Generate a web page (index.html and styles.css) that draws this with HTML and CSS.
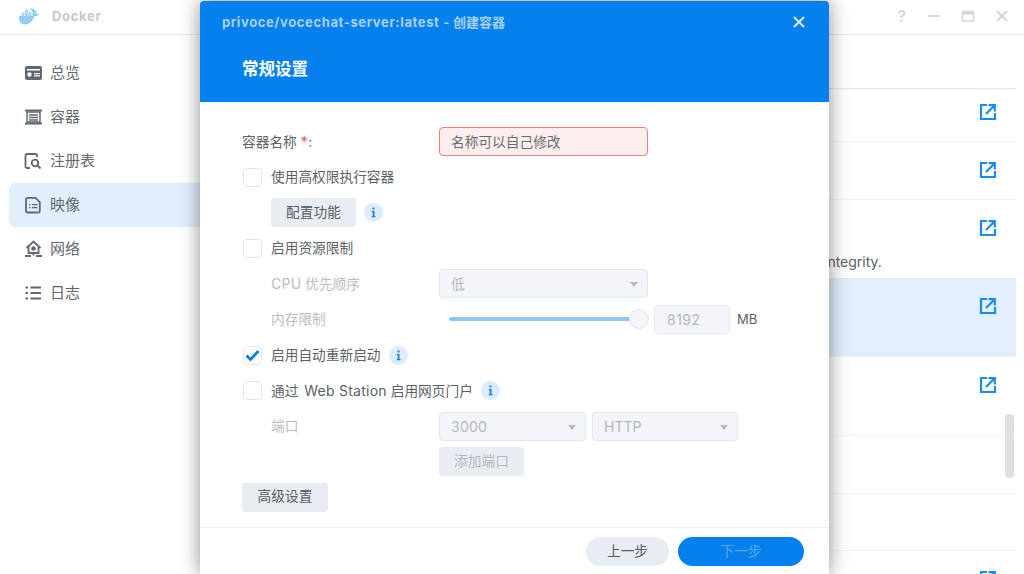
FILE: index.html
```html
<!DOCTYPE html>
<html lang="zh">
<head>
<meta charset="utf-8">
<title>Docker</title>
<link rel="stylesheet" href="styles.css">
</head>
<body>
<div class="app">
  <header class="titlebar">
    <svg class="logo" width="22" height="18" viewBox="0 0 22 18"><path d="M1 9h13.500c.4-2.800-.2-5-1.500-6.300l-1-.7.300-1.500 1.700 1.800 1.700-1.300.4 2.500 2.400-.3c.2 1.300-.3 2.300-1.400 3l4 .9c-1 1.700-2.800 2.500-4.800 2.500C14.500 14.800 11 17.500 7 17.500 3 17.500.5 14 1 9z" fill="#93cdf2"/><path d="M3.500 5.500h3V9h-3zM7 2.500h3V9H7zM10.500 4.500h3V9h-3z" fill="#a6d7f5"/></svg>
    <span class="app-name">Docker</span>
    <div class="controls">
      <span class="help">?</span>
      <svg width="14" height="14" viewBox="0 0 14 14"><path d="M1 7h12" stroke="#d3d6da" stroke-width="2"/></svg>
      <svg width="14" height="14" viewBox="0 0 14 14"><path d="M1.500 2.500h11v9.500h-11z" fill="none" stroke="#d3d6da" stroke-width="1.600"/><path d="M1 2h12v3.500H1z" fill="#d3d6da"/></svg>
      <svg width="14" height="14" viewBox="0 0 14 14"><path d="M2 2l10 10M12 2L2 12" stroke="#d3d6da" stroke-width="2"/></svg>
    </div>
  </header>
  <div class="workspace">
    <nav class="sidebar">
      <a class="nav-item"><svg width="18" height="18" viewBox="0 0 18 18"><rect x="1" y="2" width="17" height="14" rx="2" fill="#5f6873"/><path d="M3 5h13v1.500H3z" fill="#fff"/><rect x="3.500" y="8.500" width="4" height="4" rx="1" fill="#fff"/><path d="M10 9h6v1.200h-6zM10 11.300h6v1.200h-6z" fill="#fff"/></svg><span>总览</span></a>
      <a class="nav-item"><svg width="18" height="18" viewBox="0 0 18 18"><path d="M1 2.500h17M1 15.500h17" stroke="#5f6873" stroke-width="2"/><path d="M3 4h13v10H3z" fill="none" stroke="#5f6873" stroke-width="1.500"/><path d="M5 7h9M5 9.500h9M5 12h9" stroke="#5f6873" stroke-width="1.300"/></svg><span>容器</span></a>
      <a class="nav-item"><svg width="18" height="18" viewBox="0 0 18 18"><path d="M6 16H3a1.500 1.500 0 0 1-1.500-1.500v-11A1.500 1.500 0 0 1 3 2h8.500a1.500 1.500 0 0 1 1.500 1.500V5" fill="none" stroke="#5f6873" stroke-width="1.800"/><circle cx="11" cy="11" r="3.300" fill="none" stroke="#5f6873" stroke-width="1.800"/><path d="M13.500 13.500l3 3" stroke="#5f6873" stroke-width="2"/></svg><span>注册表</span></a>
      <a class="nav-item active"><svg width="18" height="18" viewBox="0 0 18 18"><path d="M3.500 1.800h8l4.300 4.300v8.900a1.500 1.500 0 0 1-1.500 1.500H3.500A1.500 1.500 0 0 1 2 15V3.300a1.500 1.500 0 0 1 1.500-1.500z" fill="none" stroke="#5f6873" stroke-width="1.800"/><path d="M5 8h1.500v1.300H5zM5 11h1.500v1.300H5zM8 8h5.500v1.300H8zM8 11h5.500v1.300H8z" fill="#5f6873"/></svg><span>映像</span></a>
      <a class="nav-item"><svg width="18" height="18" viewBox="0 0 18 18"><path d="M2.500 8L9.500 1.500 16.500 8" fill="none" stroke="#5f6873" stroke-width="1.800"/><path d="M4.500 7v6h10V7" fill="none" stroke="#5f6873" stroke-width="1.800"/><circle cx="9.500" cy="8.500" r="2.300" fill="#5f6873"/><path d="M9.500 13v2.500M1 16h6M12 16h6" stroke="#5f6873" stroke-width="1.800"/></svg><span>网络</span></a>
      <a class="nav-item"><svg width="18" height="18" viewBox="0 0 18 18"><path d="M1.500 3.500h2.500M1.500 9h2.500M1.500 14.500h2.500M6.500 3.500h10.500M6.500 9h10.500M6.500 14.500h10.500" stroke="#5f6873" stroke-width="2"/></svg><span>日志</span></a>
    </nav>
    <main class="list">
      <div class="list-head"></div>
      <div class="list-row first short"><svg class="ext" width="18" height="18" viewBox="0 0 18 18"><use href="#ext"/></svg></div>
      <div class="list-row mid"><svg class="ext" width="18" height="18" viewBox="0 0 18 18"><use href="#ext"/></svg></div>
      <div class="list-row tall"><svg class="ext" width="18" height="18" viewBox="0 0 18 18"><use href="#ext"/></svg><p class="desc">integrity.</p></div>
      <div class="list-row tall selected"><svg class="ext" width="18" height="18" viewBox="0 0 18 18"><use href="#ext"/></svg></div>
      <div class="list-row tall"><svg class="ext" width="18" height="18" viewBox="0 0 18 18"><use href="#ext"/></svg></div>
      <div class="list-row mid"></div>
      <div class="list-row bottom"></div>
      <div class="list-row bottom"><svg class="ext" width="18" height="18" viewBox="0 0 18 18"><use href="#ext"/></svg></div>
      <div class="scroll-thumb"></div>
    </main>
  </div>
</div>

<svg class="defs" width="0" height="0"><defs>
  <g id="ext" fill="none" stroke="#1a8bf0" stroke-width="2.200"><path d="M8 2H2v14h14v-6"/><path d="M7 11l8-8M9.500 2.200H15.800v6.300"/></g>
  <g id="info"><circle cx="9.500" cy="9.500" r="9.500" fill="#dcecfd"/><path d="M8.500 4.500h2v2h-2zM7.800 8h2.700v5h1v1.200H7.800V13h.9V9.200h-.9z" fill="#1a7fe0"/></g>
</defs></svg>

<section class="dialog">
  <header class="dialog-head">
    <div class="dialog-title">
      <span><span class="wide">privoce/vocechat-server:latest -</span> 创建容器</span>
      <svg width="12" height="12" viewBox="0 0 12 12"><path d="M1 1l10 10M11 1L1 11" stroke="#d4e8fb" stroke-width="2.200"/></svg>
    </div>
    <h1>常规设置</h1>
  </header>
  <div class="dialog-body">
    <div class="row"><label class="label cjk">容器名称 <em>*</em>:</label><div class="field error cjk">名称可以自己修改</div></div>
    <div class="row"><span class="check"></span><span class="check-label cjk">使用高权限执行容器</span></div>
    <div class="row indent"><button class="btn w85 cjk">配置功能</button><svg class="info" width="19" height="19" viewBox="0 0 19 19"><use href="#info"/></svg></div>
    <div class="row"><span class="check"></span><span class="check-label cjk">启用资源限制</span></div>
    <div class="row indent"><label class="label sub muted cjk"><span class="latin">CPU</span> 优先顺序</label><div class="field disabled w209 cjk">低<i class="caret"></i></div></div>
    <div class="row indent"><label class="label sub muted cjk">内存限制</label>
      <div class="slider"><div class="thumb"></div></div>
      <div class="field disabled num latin">8192</div><span class="unit">MB</span></div>
    <div class="row"><span class="check on"><svg width="19" height="19" viewBox="0 0 19 19"><path d="M3.500 9.500l4 4 8-8.500" fill="none" stroke="#0f7fe6" stroke-width="2.800"/></svg></span><span class="check-label cjk">启用自动重新启动</span><svg class="info" width="19" height="19" viewBox="0 0 19 19"><use href="#info"/></svg></div>
    <div class="row"><span class="check"></span><span class="check-label cjk">通过 <span class="latin spaced">Web Station</span> 启用网页门户</span><svg class="info" width="19" height="19" viewBox="0 0 19 19"><use href="#info"/></svg></div>
    <div class="row indent"><label class="label sub muted cjk">端口</label><div class="field disabled w147 latin">3000<i class="caret"></i></div><div class="field disabled w146 latin">HTTP<i class="caret"></i></div></div>
    <div class="row"><button class="btn off push w85">添加端口</button></div>
    <div class="row"><button class="btn w86">高级设置</button></div>
  </div>
  <footer class="dialog-foot">
    <button class="pill prev">上一步</button>
    <button class="pill next">下一步</button>
  </footer>
</section>
</body>
</html>
```
FILE: styles.css
```css
* { box-sizing: border-box; }
html, body { margin: 0; height: 100%; overflow: hidden; background: #fff; }
body { font-family: "Inter", "Noto Sans CJK SC", sans-serif; font-size: 13.700px; color: #5a6168; }

.app { height: 574px; display: flex; flex-direction: column; }
.titlebar { height: 35px; flex: none; display: flex; align-items: center; padding: 0 15px 3px 18px; border-bottom: 1px solid #e6edf8; }
.logo { margin-right: 12px; }
.app-name { font-weight: 700; font-size: 13px; letter-spacing: .7px; color: #c5cacf; }
.controls { margin-left: auto; display: flex; align-items: center; gap: 20px; }
.help { color: #d3d6da; font-size: 16px; font-weight: 600; margin-right: 1px; }

.workspace { flex: 1; display: flex; min-height: 0; }
.sidebar { width: 200px; flex: none; padding: 16px 0 0 9px; }
.nav-item { height: 44px; display: flex; align-items: center; gap: 8px; padding-left: 15px; font-size: 15px; color: #5f6873; border-radius: 6px 0 0 6px; }
.nav-item span { padding-bottom: 4px; }
.nav-item.active { background: #e1eefb; }

.list { flex: 1; position: relative; padding-right: 8px; overflow: hidden; }
.list-head { height: 53px; }
.list-row { position: relative; border-top: 1px solid #f0f2f5; padding-top: 19px; display: flex; justify-content: flex-end; padding-right: 19px; }
.list-row.first { border-top-color: #dfe8f5; padding-top: 14px; }
.short { height: 53px; }
.mid { height: 58px; }
.tall { height: 78.500px; }
.bottom { height: 57.500px; }
.selected { background: #e2effc; border-top: none; }
.desc { position: absolute; left: 624px; top: 53px; margin: 0; font-size: 14px; color: #5a6168; }
.ext { display: block; }
.scroll-thumb { position: absolute; right: 10px; top: 379px; width: 9px; height: 64px; border-radius: 4px; background: #e0e0e0; }
.defs { position: absolute; }

.dialog { position: absolute; left: 200px; top: 1px; width: 629px; height: 573px; display: flex; flex-direction: column; background: #fff; border-radius: 4px 4px 0 0; box-shadow: 0 0 20px rgba(0, 0, 0, .45); }
.dialog-head { height: 101px; flex: none; background: #0580ec; color: #fff; padding: 12px 24px 0 22px; border-radius: 4px 4px 0 0; }
.dialog-title { display: flex; align-items: center; justify-content: space-between; height: 17px; font-size: 13px; font-weight: 700; color: #a6d2fa; }
.wide { letter-spacing: .62px; }
.dialog-head h1 { margin: 25px 0 0 20px; font-size: 16.500px; line-height: 28px; font-weight: 700; color: #fff; }

.dialog-body { flex: 1; padding: 25px 42px 0; display: flex; flex-direction: column; gap: 6.600px; }
.row { height: 29px; flex: none; display: flex; align-items: center; }
.indent { padding-left: 29px; }
.label { width: 197px; flex: none; }
.label em { font-style: normal; color: #ee5a5a; font-size: 15px; }
.label.sub { width: 168px; }
.muted { color: #b8bdc2; }
.cjk { padding-bottom: 2px; }
.latin { font-size: 14px; letter-spacing: .25px; }
.spaced { margin-left: 2px; }
.check { width: 19px; height: 19px; margin-left: 1px; flex: none; border: 1px solid #dfe6ef; border-radius: 4px; background: #fff; position: relative; }
.check svg { position: absolute; left: -1px; top: -1px; }
.check-label { margin-left: 9px; }
.info { margin-left: 8px; flex: none; }

.field { height: 29px; display: flex; align-items: center; padding-left: 11px; padding-right: 11px; border-radius: 4px; position: relative; }
.field.error { width: 209px; border: 1px solid #ee8080; background: #fdeeee; color: #666c72; }
.field.disabled { background: #f3f5f8; border: 1px solid #e2e8f0; color: #b3b8be; }
.w209 { width: 209px; }
.w147 { width: 147px; }
.w146 { width: 146px; margin-left: 6px; letter-spacing: 0; }
.num { width: 76px; margin-left: 15px; padding-left: 12px; letter-spacing: .5px; }
.unit { margin-left: 7px; color: #5a6168; font-size: 13px; }
.caret { position: absolute; right: 9px; top: 12px; border-left: 4.500px solid transparent; border-right: 4.500px solid transparent; border-top: 5px solid #b5babf; }

.slider { width: 190px; margin-left: 10px; height: 4px; border-radius: 2px; background: #90c5f3; position: relative; }
.thumb { position: absolute; right: -10px; top: -8px; width: 20px; height: 20px; border-radius: 50%; background: #f3f5f8; border: 1px solid #e2e8f0; }

.btn { height: 29px; border: none; border-radius: 3px; background: #e8edf3; color: #555c63; font: inherit; }
.btn, .pill { padding: 0 0 4px; }
.w85 { width: 85px; }
.w86 { width: 86px; }
.btn.off { color: #b3b8be; }
.push { margin-left: 197px; }

.dialog-foot { height: 47px; flex: none; border-top: 1px solid #eef1f5; padding: 9px 25px 0 0; display: flex; justify-content: flex-end; gap: 9px; }
.pill { height: 29px; border: none; border-radius: 15px; font: inherit; }
.prev { width: 83px; background: #e8edf3; color: #555c63; }
.next { width: 126px; background: #0580ec; color: #59a8f1; }
```
